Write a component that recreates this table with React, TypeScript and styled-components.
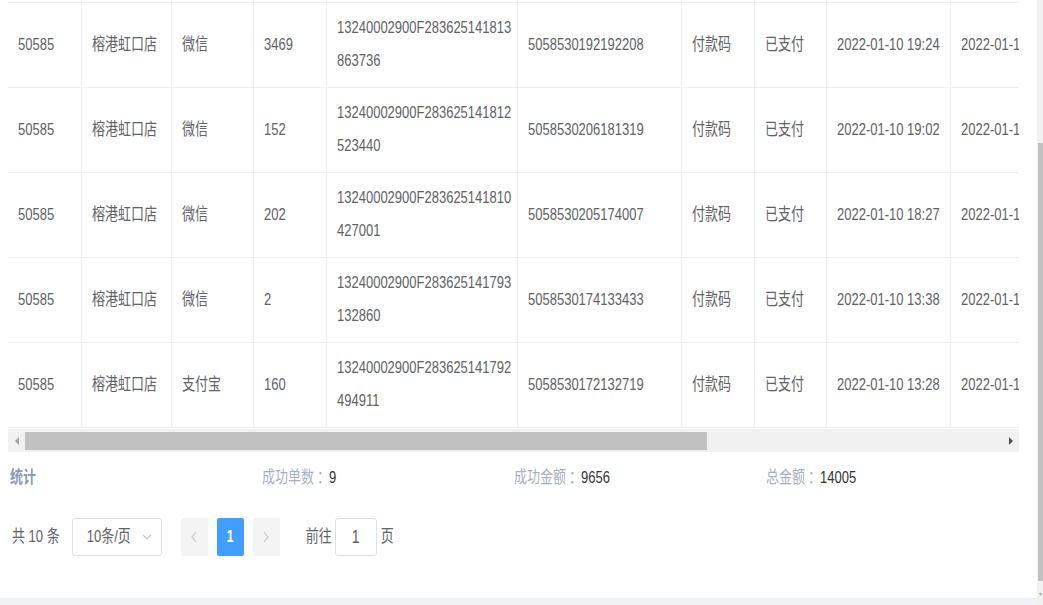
import styled, { createGlobalStyle } from "styled-components";

const GlobalStyle = createGlobalStyle`
  html, body {
    margin: 0;
    padding: 0;
    overflow: hidden;
    background: #ffffff;
  }
  body {
    font-family: "Liberation Sans", "Noto Sans CJK SC", sans-serif;
    font-size: 13px;
    color: #606266;
  }
`;

interface OrderRow {
  shopId: string;
  shop: string;
  channel: string;
  amount: string;
  tradeNo: string;
  orderNo: string;
  payType: string;
  status: string;
  payTime: string;
  createTime: string;
}

const rows: OrderRow[] = [
  {
    shopId: "50585",
    shop: "榕港虹口店",
    channel: "微信",
    amount: "3469",
    tradeNo: "13240002900F283625141813863736",
    orderNo: "5058530192192208",
    payType: "付款码",
    status: "已支付",
    payTime: "2022-01-10 19:24",
    createTime: "2022-01-10 19:24",
  },
  {
    shopId: "50585",
    shop: "榕港虹口店",
    channel: "微信",
    amount: "152",
    tradeNo: "13240002900F283625141812523440",
    orderNo: "5058530206181319",
    payType: "付款码",
    status: "已支付",
    payTime: "2022-01-10 19:02",
    createTime: "2022-01-10 19:02",
  },
  {
    shopId: "50585",
    shop: "榕港虹口店",
    channel: "微信",
    amount: "202",
    tradeNo: "13240002900F283625141810427001",
    orderNo: "5058530205174007",
    payType: "付款码",
    status: "已支付",
    payTime: "2022-01-10 18:27",
    createTime: "2022-01-10 18:27",
  },
  {
    shopId: "50585",
    shop: "榕港虹口店",
    channel: "微信",
    amount: "2",
    tradeNo: "13240002900F283625141793132860",
    orderNo: "5058530174133433",
    payType: "付款码",
    status: "已支付",
    payTime: "2022-01-10 13:38",
    createTime: "2022-01-10 13:38",
  },
  {
    shopId: "50585",
    shop: "榕港虹口店",
    channel: "支付宝",
    amount: "160",
    tradeNo: "13240002900F283625141792494911",
    orderNo: "5058530172132719",
    payType: "付款码",
    status: "已支付",
    payTime: "2022-01-10 13:28",
    createTime: "2022-01-10 13:28",
  },
];

const stats = [
  { label: "成功单数", value: "9" },
  { label: "成功金额", value: "9656" },
  { label: "总金额", value: "14005" },
];

const COLS = "74px 90px 82px 73px 191px 164px 73px 72px 124px 160px";

const Page = styled.div`
  display: flex;
  width: 1043px;
  height: 605px;
`;

const Main = styled.div`
  flex: 1;
  display: flex;
  flex-direction: column;
  min-width: 0;
`;

const Content = styled.div`
  flex: 1;
  background: #ffffff;
  padding-left: 8px;
  overflow: hidden;
`;

const BottomStrip = styled.div`
  height: 7px;
  background: #f0f2f5;
`;

const TableWrap = styled.div`
  width: 1011px;
  overflow: hidden;
`;

const Row = styled.div<{ $h: number }>`
  display: grid;
  grid-template-columns: ${COLS};
  width: max-content;
  height: ${(p) => p.$h}px;
  box-sizing: border-box;
  border-bottom: 1px solid #ebeef5;
`;

const Cell = styled.div`
  display: flex;
  align-items: center;
  padding: 0 10px;
  box-sizing: border-box;
  border-right: 1px solid #ebeef5;
  white-space: nowrap;
  overflow: hidden;
  color: #606266;
`;

const Tall = styled.span<{ $lh?: number }>`
  display: inline-block;
  line-height: ${(p) => p.$lh ?? 16}px;
  transform: scaleY(1.3);
  transform-origin: center;
`;

const HScroll = styled.div`
  display: flex;
  align-items: center;
  width: 1011px;
  height: 23px;
  margin-top: 1px;
  background: #f1f1f1;
`;

const ArrowBox = styled.div`
  width: 17px;
  height: 100%;
  display: flex;
  align-items: center;
  justify-content: center;
`;

const Triangle = styled.span<{ $dir: "left" | "right"; $color: string }>`
  width: 0;
  height: 0;
  border-top: 4px solid transparent;
  border-bottom: 4px solid transparent;
  ${(p) =>
    p.$dir === "left"
      ? `border-right: 4px solid ${p.$color};`
      : `border-left: 4px solid ${p.$color};`}
`;

const HThumb = styled.div`
  width: 682px;
  height: 18px;
  background: #c1c1c1;
`;

const Spacer = styled.div`
  flex: 1;
`;

const Stats = styled.div`
  display: grid;
  grid-template-columns: repeat(4, 252px);
  height: 32px;
  margin-top: 10px;
  align-items: center;
`;

const StatCell = styled.div`
  display: flex;
  align-items: center;
  padding-left: 2px;
  font-size: 13px;
`;

const StatTitle = styled(Tall)`
  color: #8a9ab3;
  font-weight: 600;
`;

const StatLabel = styled(Tall)`
  color: #a3afc2;
`;

const Colon = styled(Tall)`
  width: 15px;
  padding-left: 3px;
  box-sizing: border-box;
  overflow: hidden;
  color: #a3afc2;
`;

const StatValue = styled(Tall)`
  color: #333333;
`;

const Pager = styled.div`
  display: flex;
  align-items: center;
  height: 38px;
  margin-top: 24px;
  padding-left: 4px;
  color: #606266;
`;

const Total = styled.div`
  margin-right: 12px;
`;

const SizeSelect = styled.div`
  width: 90px;
  height: 38px;
  box-sizing: border-box;
  border: 1px solid #dcdfe6;
  border-radius: 3px;
  display: flex;
  align-items: center;
  padding: 0 9px 0 14px;
  justify-content: space-between;
  margin-right: 19px;
`;

const PageBtn = styled.div<{ $active?: boolean }>`
  width: 27px;
  height: 38px;
  border-radius: 2px;
  display: flex;
  align-items: center;
  justify-content: center;
  background: ${(p) => (p.$active ? "#409eff" : "#f4f4f5")};
  color: ${(p) => (p.$active ? "#ffffff" : "#c0c4cc")};
  font-weight: bold;
  margin-right: 9px;
`;

const Jumper = styled.div`
  display: flex;
  align-items: center;
  margin-left: 17px;
`;

const JumpInput = styled.div`
  width: 42px;
  height: 38px;
  box-sizing: border-box;
  border: 1px solid #dcdfe6;
  border-radius: 3px;
  margin: 0 4px 0 3px;
  display: flex;
  align-items: center;
  justify-content: center;
  font-size: 14px;
`;

const VScroll = styled.div`
  width: 6px;
  display: flex;
  flex-direction: column;
  background: #f1f1f1;
`;

const VTrackTop = styled.div`
  height: 143px;
`;

const VThumb = styled.div`
  flex: 1;
  margin-left: 1px;
  background: #c1c1c1;
`;

const VArrow = styled.div`
  height: 24px;
  display: flex;
  align-items: center;
  justify-content: center;
  color: #a3a3a3;
  font-size: 6px;
`;

const Chevron = ({ dir }: { dir: "left" | "right" | "down" }) => {
  const d =
    dir === "left" ? "M6 1 L2 6 L6 11" : dir === "right" ? "M2 1 L6 6 L2 11" : "M1 2 L5 6 L9 2";
  const w = dir === "down" ? 10 : 8;
  const h = dir === "down" ? 8 : 12;
  return (
    <svg width={w} height={h} viewBox={`0 0 ${w} ${h}`} fill="none">
      <path d={d} stroke="#c0c4cc" strokeWidth="1.1" />
    </svg>
  );
};

export default function App() {
  return (
    <>
      <GlobalStyle />
      <Page>
        <Main>
          <Content>
            <TableWrap>
              <Row $h={3}>
                {Array.from({ length: 10 }).map((_, i) => (
                  <Cell key={i} />
                ))}
              </Row>
              {rows.map((r, idx) => (
                <Row $h={85} key={idx}>
                  <Cell>
                    <Tall>{r.shopId}</Tall>
                  </Cell>
                  <Cell>
                    <Tall>{r.shop}</Tall>
                  </Cell>
                  <Cell>
                    <Tall>{r.channel}</Tall>
                  </Cell>
                  <Cell>
                    <Tall>{r.amount}</Tall>
                  </Cell>
                  <Cell>
                    <Tall $lh={24.6}>
                      {r.tradeNo.slice(0, 24)}
                      <br />
                      {r.tradeNo.slice(24)}
                    </Tall>
                  </Cell>
                  <Cell>
                    <Tall>{r.orderNo}</Tall>
                  </Cell>
                  <Cell>
                    <Tall>{r.payType}</Tall>
                  </Cell>
                  <Cell>
                    <Tall>{r.status}</Tall>
                  </Cell>
                  <Cell>
                    <Tall>{r.payTime}</Tall>
                  </Cell>
                  <Cell>
                    <Tall>{r.createTime}</Tall>
                  </Cell>
                </Row>
              ))}
            </TableWrap>
            <HScroll>
              <ArrowBox>
                <Triangle $dir="left" $color="#a3a3a3" />
              </ArrowBox>
              <HThumb />
              <Spacer />
              <ArrowBox>
                <Triangle $dir="right" $color="#505050" />
              </ArrowBox>
            </HScroll>
            <Stats>
              <StatCell>
                <StatTitle>统计</StatTitle>
              </StatCell>
              {stats.map((s) => (
                <StatCell key={s.label}>
                  <StatLabel>{s.label}</StatLabel>
                  <Colon>：</Colon>
                  <StatValue>{s.value}</StatValue>
                </StatCell>
              ))}
            </Stats>
            <Pager>
              <Total>
                <Tall>共 10 条</Tall>
              </Total>
              <SizeSelect>
                <Tall>10条/页</Tall>
                <Chevron dir="down" />
              </SizeSelect>
              <PageBtn>
                <Chevron dir="left" />
              </PageBtn>
              <PageBtn $active>
                <Tall>1</Tall>
              </PageBtn>
              <PageBtn>
                <Chevron dir="right" />
              </PageBtn>
              <Jumper>
                <Tall>前往</Tall>
                <JumpInput>
                  <Tall>1</Tall>
                </JumpInput>
                <Tall>页</Tall>
              </Jumper>
            </Pager>
          </Content>
          <BottomStrip />
        </Main>
        <VScroll>
          <VTrackTop />
          <VThumb />
          <VArrow>▾</VArrow>
        </VScroll>
      </Page>
    </>
  );
}
